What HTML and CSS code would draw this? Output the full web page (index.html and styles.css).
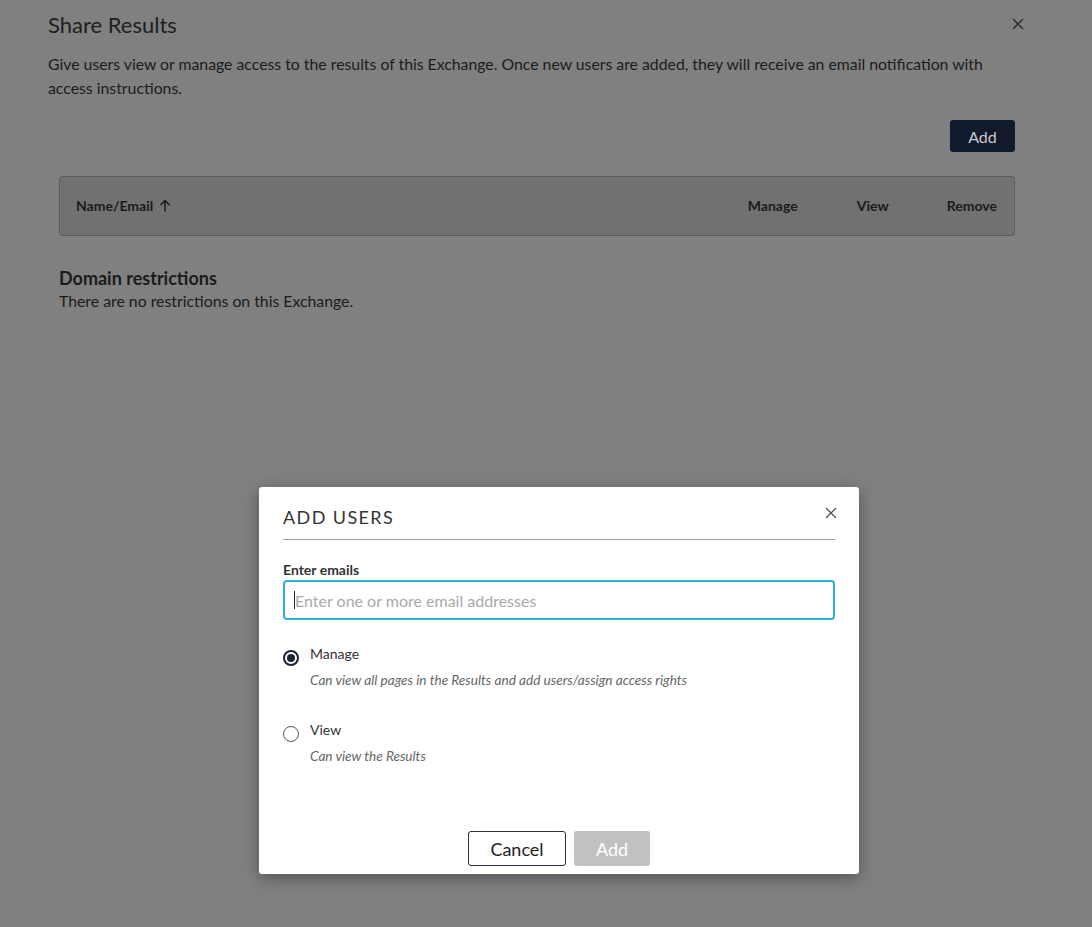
FILE: index.html
```html
<!DOCTYPE html>
<html lang="en">
<head>
<meta charset="utf-8">
<title>Share Results</title>
<link rel="stylesheet" href="styles.css">
</head>
<body>
<div class="page">
  <div class="page-head">
    <h1 class="page-title">Share Results</h1>
    <button class="close-btn page-close" aria-label="Close">
      <svg width="12" height="12" viewBox="0 0 12 12"><path d="M1 1L11 11M11 1L1 11" stroke="currentColor" stroke-width="1.6" fill="none"/></svg>
    </button>
  </div>
  <p class="page-desc">Give users view or manage access to the results of this Exchange. Once new users are added, they will receive an email notification with access instructions.</p>
  <div class="panel">
    <div class="toolbar"><button class="btn-dark">Add</button></div>
    <div class="table-head">
      <div class="col-name">Name/Email
        <svg class="sort-icon" width="12" height="13" viewBox="0 0 12 13"><path d="M6 12.5V1.5M1.5 6L6 1.5L10.5 6" stroke="currentColor" stroke-width="1.5" fill="none"/></svg>
      </div>
      <div class="col col-manage">Manage</div>
      <div class="col col-view">View</div>
      <div class="col col-remove">Remove</div>
    </div>
    <h2 class="section-title">Domain restrictions</h2>
    <p class="section-text">There are no restrictions on this Exchange.</p>
  </div>
</div>

<div class="modal" role="dialog">
  <div class="modal-head">
    <h3 class="modal-title">ADD USERS</h3>
    <button class="close-btn modal-close" aria-label="Close">
      <svg width="12" height="12" viewBox="0 0 12 12"><path d="M1 1L11 11M11 1L1 11" stroke="currentColor" stroke-width="1.4" fill="none"/></svg>
    </button>
  </div>
  <label class="field-label" for="emails">Enter emails</label>
  <div class="input-wrap">
    <span class="caret"></span>
    <input id="emails" class="field-input" placeholder="Enter one or more email addresses">
  </div>
  <div class="options">
    <div class="option">
      <span class="radio checked"></span>
      <div class="option-text">
        <div class="option-label">Manage</div>
        <div class="option-desc">Can view all pages in the Results and add users/assign access rights</div>
      </div>
    </div>
    <div class="option">
      <span class="radio"></span>
      <div class="option-text">
        <div class="option-label">View</div>
        <div class="option-desc">Can view the Results</div>
      </div>
    </div>
  </div>
  <div class="modal-actions">
    <button class="btn-outline">Cancel</button>
    <button class="btn-disabled">Add</button>
  </div>
</div>
</body>
</html>
```
FILE: styles.css
```css
html, body {
  margin: 0;
  padding: 0;
}
body {
  background: #808080;
  font-family: Lato, "Open Sans", sans-serif;
  color: #1b1b1b;
  min-height: 927px;
  position: relative;
}
button {
  font-family: inherit;
}
.page {
  padding: 11px 68px 0 48px;
}
.page-head {
  display: flex;
  justify-content: space-between;
  align-items: flex-start;
}
.page-title {
  margin: 0;
  font-size: 22px;
  line-height: 28px;
  font-weight: 400;
  color: #1e1e1e;
}
.close-btn {
  background: none;
  border: 0;
  padding: 0;
  cursor: pointer;
  display: flex;
}
.page-close {
  color: #333;
  margin-top: 7px;
}
.page-desc {
  margin: 13px 0 0;
  font-size: 15.8px;
  line-height: 24px;
  color: #1b1b1b;
}
.panel {
  margin: 0 9px 0 11px;
}
.toolbar {
  display: flex;
  justify-content: flex-end;
  margin-top: 20px;
}
.btn-dark {
  background: #111a2c;
  color: #c9cbd0;
  border: 0;
  border-radius: 3px;
  width: 65px;
  height: 32px;
  font-size: 16px;
}
.table-head {
  margin-top: 24px;
  height: 60px;
  box-sizing: border-box;
  background: #717171;
  border: 1px solid #5c5c5c;
  border-radius: 3px;
  display: flex;
  align-items: center;
  padding: 0 17px 1px 16px;
  font-size: 14px;
  font-weight: 700;
  color: #1b1b1b;
}
.col-name {
  flex: 1;
  display: flex;
  align-items: center;
  gap: 6px;
}
.sort-icon {
  color: #1b1b1b;
}
.col-manage { width: 109px; }
.col-view { width: 90px; }
.col-remove { width: auto; }
.section-title {
  margin: 30px 0 0;
  font-size: 18px;
  line-height: 24px;
  font-weight: 700;
  color: #1b1b1b;
}
.section-text {
  margin: 0;
  font-size: 15.8px;
  line-height: 22px;
  color: #1b1b1b;
}

/* Modal */
.modal {
  position: absolute;
  left: 259px;
  top: 487px;
  width: 600px;
  height: 387px;
  box-sizing: border-box;
  background: #fff;
  border-radius: 3px;
  box-shadow: 0 4px 16px rgba(0,0,0,0.35);
  padding: 0 24px;
  display: flex;
  flex-direction: column;
}
.modal-head {
  display: flex;
  justify-content: space-between;
  align-items: flex-start;
  border-bottom: 1px solid #9e9e9e;
  padding-top: 17px;
  padding-bottom: 8px;
}
.modal-title {
  margin: 0;
  font-size: 18px;
  line-height: 27px;
  font-weight: 400;
  letter-spacing: 1.4px;
  color: #333;
}
.modal-close {
  color: #555;
  margin-top: 3px;
  margin-right: -2px;
}
.field-label {
  margin-top: 21px;
  font-size: 14px;
  line-height: 18px;
  font-weight: 700;
  color: #333;
}
.input-wrap {
  position: relative;
  margin-top: 1px;
}
.field-input {
  width: 100%;
  height: 40px;
  box-sizing: border-box;
  border: 2px solid #2fb2d2;
  border-radius: 4px;
  padding: 0 10px;
  font-family: inherit;
  font-size: 16px;
  color: #333;
  outline: none;
}
.field-input::placeholder {
  color: #a9a9a9;
}
.caret {
  position: absolute;
  left: 11px;
  top: 11px;
  width: 1px;
  height: 18px;
  background: #222;
}
.options {
  margin-top: 25px;
  display: flex;
  flex-direction: column;
  gap: 32px;
}
.option {
  display: flex;
  gap: 11px;
  align-items: flex-start;
}
.radio {
  width: 16px;
  height: 16px;
  box-sizing: border-box;
  border: 1.5px solid #555;
  border-radius: 50%;
  margin-top: 5px;
  display: flex;
  align-items: center;
  justify-content: center;
  flex: none;
}
.radio.checked {
  border: 2px solid #1a2238;
}
.radio.checked::after {
  content: "";
  width: 8px;
  height: 8px;
  border-radius: 50%;
  background: #1a2238;
}
.option-label {
  font-size: 14px;
  line-height: 18px;
  color: #333;
}
.option-desc {
  margin-top: 8px;
  font-size: 13.6px;
  line-height: 18px;
  font-style: italic;
  color: #666;
}
.modal-actions {
  margin-top: auto;
  margin-bottom: 8px;
  display: flex;
  justify-content: center;
  gap: 8px;
}
.btn-outline {
  width: 98px;
  height: 35px;
  background: #fff;
  border: 1px solid #27314a;
  border-radius: 3px;
  font-size: 18px;
  color: #222;
}
.btn-disabled {
  width: 76px;
  height: 35px;
  background: #c1c1c3;
  border: 0;
  border-radius: 3px;
  font-size: 18px;
  color: #fff;
}
```
